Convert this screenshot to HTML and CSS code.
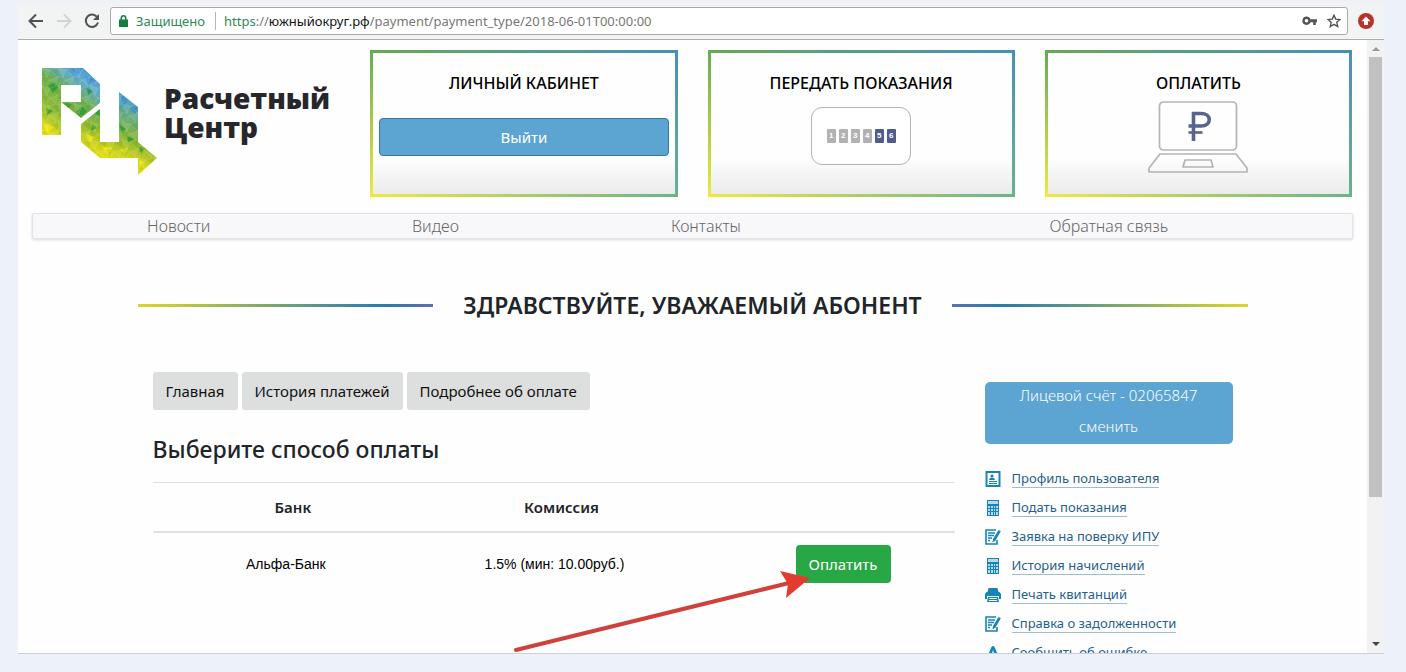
FILE: index.html
```html
<!DOCTYPE html>
<html lang="ru">
<head>
<meta charset="utf-8">
<title>Расчетный Центр</title>
<link rel="stylesheet" href="styles.css">
</head>
<body>
<svg class="sprite" aria-hidden="true">
  <symbol id="i-profile" viewBox="0 0 16 16">
    <path fill="none" stroke="currentColor" stroke-width="2" d="M1.500 1h13v14h-13z"/>
    <circle cx="7" cy="5" r="1.600" fill="currentColor"/>
    <path fill="currentColor" d="M4 9c0-3 6-3 6 0zM4 10h8v1H4zM4 12h8v1H4z"/>
  </symbol>
  <symbol id="i-calc" viewBox="0 0 16 16">
    <path fill="currentColor" fill-opacity=".3" d="M2 0h12v16H2z"/>
    <path fill="currentColor" fill-rule="evenodd" d="M2 0h12v16H2zM3 1v3h10V1zM3 6v2h2V6zm3 0v2h2V6zm3 0v2h1V6zm2 0v2h2V6zM3 9v2h2V9zm3 0v2h2V9zm3 0v2h1V9zm2 0v2h2V9zM3 12v3h2v-3zm3 0v3h2v-3zm3 0v3h1v-3zm2 0v3h2v-3z"/>
  </symbol>
  <symbol id="i-edit" viewBox="0 0 16 16">
    <path fill="none" stroke="currentColor" stroke-width="1.600" d="M11 1H1v14h11v-4"/>
    <path stroke="currentColor" stroke-width="1.300" d="M3 4h7M3 6.500h6M3 9h4M3 11.500h2"/>
    <path fill="currentColor" d="M13.500 1l2.300 1.300-5.300 9.200-3 2 .5-3.500z"/>
  </symbol>
  <symbol id="i-print" viewBox="0 0 16 16">
    <path fill="currentColor" fill-rule="evenodd" d="M3.500 1h9l1 4H2.500zM1.500 5h13L16 7v5h-2v-3H2v3H0V7zM3 10h10l1 5H2zM4.300 11l-.2 1h7.800l-.2-1zM4 13l-.2 1h8.400L12 13z"/>
  </symbol>
  <symbol id="i-alert" viewBox="0 0 16 16">
    <path fill="currentColor" fill-rule="evenodd" d="M8 1c1 0 1.500.7 2 2l5 12H1L6 3c.5-1.300 1-2 2-2zM8 5l-1.500 5h3z"/>
  </symbol>
</svg>

<header class="toolbar">
  <button class="tool" type="button" aria-label="Назад">
    <svg width="16" height="16" viewBox="0 0 16 16" fill="none" stroke="#50534f" stroke-width="2"><path d="M15 8H2M8 1.500L1.500 8 8 14.500"/></svg>
  </button>
  <button class="tool" type="button" aria-label="Вперёд">
    <svg width="16" height="16" viewBox="0 0 16 16" fill="none" stroke="#d3d3d3" stroke-width="2"><path d="M1 8h13M8 1.500L14.500 8 8 14.500"/></svg>
  </button>
  <button class="tool" type="button" aria-label="Обновить">
    <svg width="16" height="16" viewBox="0 0 16 16"><path fill="none" stroke="#50534f" stroke-width="2" d="M13.200 4.200A6.200 6.200 0 1 0 14 9.500"/><path fill="#50534f" d="M15 1v6H9z"/></svg>
  </button>
  <div class="address">
    <svg width="9" height="12" viewBox="0 0 9 12"><path fill="#11803f" fill-rule="evenodd" d="M0 4.500h1.500V3a3 3 0 0 1 6 0v1.500H9V12H0zM3 4.500h3V3a1.500 1.500 0 0 0-3 0z"/></svg>
    <span class="secure">Защищено</span>
    <div class="url" role="textbox" aria-label="Адрес страницы"><span class="scheme">https</span>://<span class="host">южныйокруг.рф</span>/payment/payment_type/2018-06-01T00:00:00</div>
    <svg width="15" height="10" viewBox="0 0 15 10"><path fill="#555" fill-rule="evenodd" d="M4.500.5a4.200 4.200 0 0 1 4 2.800H15v2.900h-1.200V9h-2.600V6.200H8.500A4.200 4.200 0 1 1 4.500.5zm0 2.500a1.800 1.800 0 1 0 0 3.600 1.800 1.800 0 0 0 0-3.600z"/></svg>
    <svg class="star" width="14" height="14" viewBox="0 0 14 14"><path fill="none" stroke="#50534f" stroke-width="1.400" d="M7 1.200l1.700 3.900 4.300.4-3.200 2.800.9 4.200L7 10.300l-3.700 2.200.9-4.200L1 5.500l4.300-.4z"/></svg>
  </div>
  <svg width="16" height="16" viewBox="0 0 16 16"><circle cx="8" cy="8" r="8" fill="#b5332b"/><path fill="#fff" d="M8 3.500l4.500 4.700H10V12H6V8.200H3.500z"/></svg>
</header>

<div class="window">
  <div class="page">
    <div class="top">
      <a class="logo" href="#">
        <svg width="115" height="108" viewBox="0 0 115 108">
          <defs>
            <linearGradient id="gp" gradientUnits="userSpaceOnUse" x1="52" y1="2" x2="8" y2="66">
              <stop offset="0" stop-color="#4298dd"/><stop offset=".22" stop-color="#63abc8"/><stop offset=".42" stop-color="#6cae4a"/><stop offset=".72" stop-color="#8fbb32"/><stop offset="1" stop-color="#e5dc12"/>
            </linearGradient>
            <linearGradient id="gu" gradientUnits="userSpaceOnUse" x1="88" y1="28" x2="62" y2="94">
              <stop offset="0" stop-color="#4a9fe0"/><stop offset=".3" stop-color="#68ac78"/><stop offset=".55" stop-color="#86b52f"/><stop offset=".85" stop-color="#d6d415"/><stop offset="1" stop-color="#e9df08"/>
            </linearGradient>
            <pattern id="mesh" width="16" height="18" patternUnits="userSpaceOnUse">
              <path fill="#fff" fill-opacity=".1" d="M0 0l8 2-3 7zM16 9l-8 3 6 6z"/>
              <path fill="#064" fill-opacity=".08" d="M8 2l8-2v9zM0 9l5 0-1 9z"/>
              <path fill="none" stroke="#fff" stroke-opacity=".18" stroke-width=".6" d="M0 0l8 2 8-2M8 2L5 9H0M5 9l3 3 8-3L8 2M0 0l5 9-5 9M8 12l-4 6M8 12l6 6M0 18l8-6M16 9v9"/>
            </pattern>
            <clipPath id="shape"><path clip-rule="evenodd" d="M0 0h41l17 16v19L39 50 19 34v33H0zM19 17v17h20V17zM58 41v33h19V24l19 15v35l19 16-19 17V90H58L39 74V56z"/></clipPath>
          </defs>
          <g clip-path="url(#shape)">
            <path fill="url(#gp)" d="M0 0h58v35L39 51 19 67H0z"/>
            <path fill="url(#gu)" d="M39 55l19-14 19-20 38 0v87H39z"/>
            <path fill="#249637" fill-opacity=".75" d="M6 18l6-4 4 5-5 6zM22 35l9 1-5 4zM34 44l6-6 5 5-6 7zM45 20l6 3-5 5zM50 44l8-3v8zM78 57l6 4-5 4zM85 68l7 3-6 4zM97 79l6 1-4 5zM50 56l5 4-6 3zM4 40l7 3-6 4z"/>
            <path fill="#2f80d2" fill-opacity=".5" d="M28 0h13l-5 7zM43 8l10 4-7 5zM79 27l8 6-7 6zM88 40l8-1-3 8z"/>
            <path fill="#fff000" fill-opacity=".6" d="M2 56l10 3-7 6zM44 66l9 3-6 6zM60 78l10 2-5 7zM97 92l5 2-5 6zM78 82l8-2-3 6z"/>
            <path fill="url(#mesh)" d="M0 0h115v108H0z"/>
          </g>
        </svg>
        <span class="logo-text">Расчетный<br>Центр</span>
      </a>
      <section class="card">
        <h2>ЛИЧНЫЙ КАБИНЕТ</h2>
        <button class="exit" type="button">Выйти</button>
      </section>
      <a class="card" href="#">
        <h2>ПЕРЕДАТЬ ПОКАЗАНИЯ</h2>
        <span class="meter"><i>1</i><i>2</i><i>3</i><i>4</i><i class="dark">5</i><i class="dark">6</i></span>
      </a>
      <a class="card" href="#">
        <h2>ОПЛАТИТЬ</h2>
        <svg class="laptop" width="100" height="72" viewBox="0 0 100 72" fill="none" stroke="#b4b4b6" stroke-width="1.700">
          <rect x="11.500" y="1" width="77" height="48" rx="4"/>
          <path stroke-linejoin="round" d="M12 53h76l11 14v4H1v-4zM37 59h26l2 7H35z"/>
          <path stroke="#56648f" stroke-width="3.600" d="M45.500 40V12.500H53c11 0 11 12.500 0 12.500H40.500"/><path stroke="#56648f" stroke-width="2.600" d="M40.500 31.500h14"/>
        </svg>
      </a>
    </div>

    <nav class="menu">
      <a href="#">Новости</a><a href="#">Видео</a><a href="#">Контакты</a><a href="#">Обратная связь</a>
    </nav>

    <main class="container">
      <h1 class="greeting">ЗДРАВСТВУЙТЕ, УВАЖАЕМЫЙ АБОНЕНТ</h1>
      <div class="columns">
        <section class="payment">
          <div class="buttons">
            <button type="button">Главная</button>
            <button type="button">История платежей</button>
            <button type="button">Подробнее об оплате</button>
          </div>
          <h2>Выберите способ оплаты</h2>
          <table>
            <colgroup><col class="c-bank"><col class="c-fee"><col></colgroup>
            <thead><tr><th scope="col">Банк</th><th scope="col">Комиссия</th><th></th></tr></thead>
            <tbody><tr><td>Альфа-Банк</td><td>1.5% (мин: 10.00руб.)</td><td class="action"><button class="pay" type="button">Оплатить</button></td></tr></tbody>
          </table>
        </section>
        <aside class="side">
          <button class="account" type="button"><span>Лицевой счёт - 02065847</span><span>сменить</span></button>
          <ul>
            <li><svg><use href="#i-profile"/></svg><a href="#">Профиль пользователя</a></li>
            <li><svg><use href="#i-calc"/></svg><a href="#">Подать показания</a></li>
            <li><svg><use href="#i-edit"/></svg><a href="#">Заявка на поверку ИПУ</a></li>
            <li><svg><use href="#i-calc"/></svg><a href="#">История начислений</a></li>
            <li><svg><use href="#i-print"/></svg><a href="#">Печать квитанций</a></li>
            <li><svg><use href="#i-edit"/></svg><a href="#">Справка о задолженности</a></li>
            <li><svg><use href="#i-alert"/></svg><a href="#">Сообщить об ошибке</a></li>
          </ul>
        </aside>
      </div>
    </main>
  </div>
  <div class="scrollbar" aria-hidden="true">
    <svg width="8" height="4" viewBox="0 0 8 4"><path fill="#999" d="M4 0l4 4H0z"/></svg>
    <div class="track"><div class="thumb"></div></div>
    <svg width="8" height="4" viewBox="0 0 8 4"><path fill="#444" d="M0 0h8L4 4z"/></svg>
  </div>
</div>
<svg class="pointer" width="298" height="84" viewBox="0 0 298 84" aria-hidden="true">
  <path stroke="#cf423c" stroke-width="4" stroke-linecap="round" d="M3 81L276 14"/>
  <path fill="#e23c30" d="M267 2l30 7-24 20 2-14z"/>
</svg>
</body>
</html>
```
FILE: styles.css
```css
* { box-sizing: border-box; }

body {
  margin: 0;
  height: 100vh;
  padding: 0 22px 18px 18px;
  display: flex;
  flex-direction: column;
  position: relative;
  overflow: hidden;
  background: #edf1f9;
  color: #212529;
  font: 15px/24px "Noto Sans", "Open Sans", sans-serif;
}

a { color: inherit; text-decoration: none; }
button { font: inherit; border: 0; padding: 0; cursor: pointer; }
h1, h2, ul { margin: 0; padding: 0; }
svg { flex: none; }
.sprite { position: absolute; width: 0; height: 0; }

.toolbar {
  flex: none;
  height: 40px;
  padding: 2px 10px 0;
  display: flex;
  align-items: center;
  gap: 12px;
  background: linear-gradient(#eef1f7, #f2f3f3 8px);
  border-bottom: 1px solid #aaaeac;
}
.tool { display: flex; background: none; }
.address {
  flex: 1;
  min-width: 0;
  height: 28px;
  margin: 0 -2px;
  padding: 0 6px 0 8px;
  display: flex;
  align-items: center;
  gap: 8px;
  background: #fff;
  border: 1px solid #a9aaa9;
  border-radius: 3px;
  font-size: 13px;
  line-height: 18px;
}
.secure { padding-right: 10px; border-right: 1px solid #b5b5b5; color: #2d8a57; }
.url { flex: 1; min-width: 0; white-space: nowrap; overflow: hidden; color: #777; }
.scheme { color: #2d8a57; }
.host { color: #111; }
.star { margin-left: 2px; }

.window {
  flex: 1;
  min-height: 0;
  display: flex;
  background: #fefefe;
  border-bottom: 1px solid #cdd0d6;
}
.page { flex: 1; min-width: 0; overflow: hidden; padding: 10px 15px 0; }
.scrollbar {
  width: 17px;
  padding: 7px 2px;
  display: flex;
  flex-direction: column;
  align-items: center;
  background: #f1f2f1;
}
.track { flex: 1; width: 100%; padding: 6px 0; }
.thumb { height: 76%; background: #c1c1c1; }

.top { display: grid; grid-template-columns: repeat(4, minmax(0, 1fr)); gap: 30px; }
.logo { padding: 18px 0 0 9px; display: flex; gap: 7px; }
.logo-text {
  padding-top: 16px;
  color: #27272b;
  font: 800 28px/29px "Open Sans", "Noto Sans", sans-serif;
}
.card {
  height: 147px;
  padding: 18px 6px 0;
  display: flex;
  flex-direction: column;
  align-items: center;
  color: #000;
  border: 3px solid transparent;
  background:
    linear-gradient(#fefefe 74%, #ebebeb) padding-box,
    linear-gradient(90deg, #63ad52, #4590bb) top / 100% 3px no-repeat border-box,
    linear-gradient(90deg, #f0e93c, #69b38d) bottom / 100% 3px no-repeat border-box,
    linear-gradient(#63ad52, #f0e93c) left / 3px 100% no-repeat border-box,
    linear-gradient(#4590bb, #69b38d) right / 3px 100% no-repeat border-box;
}
.card h2 { font-size: 16px; line-height: 24px; font-weight: 500; }
.exit {
  width: 100%;
  height: 38px;
  margin-top: 23px;
  color: #fff;
  background: #5ca4d1;
  border: 1px solid #39779f;
  border-radius: 4px;
}
.meter {
  width: 100px;
  height: 58px;
  margin-top: 12px;
  display: flex;
  align-items: center;
  justify-content: center;
  gap: 3px;
  background: #fff;
  border: 1px solid #b4b4b6;
  border-radius: 11px;
}
.meter i {
  width: 9px;
  height: 14px;
  color: #fff;
  background: #b2b2b2;
  border-radius: 1px;
  font: bold 8px/14px "Liberation Sans", sans-serif;
  text-align: center;
}
.meter .dark { background: #4e5d8c; }
.laptop { margin-top: 6px; }

.menu {
  margin: 16px -1px 0;
  display: grid;
  grid-template-columns: 292fr 222fr 320fr 487fr;
  background: #f8f8fa;
  border: 1px solid #e4e4e8;
  border-radius: 2px;
  box-shadow: 0 1px 3px rgba(0, 0, 0, .15);
  color: #666;
  text-align: center;
  font-size: 16px;
  font-weight: 300;
}

.container { max-width: 1110px; margin: 0 auto; padding-top: 48px; }
.greeting {
  display: flex;
  align-items: center;
  gap: 30px;
  font-size: 23px;
  line-height: 36px;
  font-weight: 600;
  white-space: nowrap;
}
.greeting::before, .greeting::after {
  content: "";
  flex: 1;
  height: 3px;
  background: linear-gradient(90deg, #d9d72e, #2e79ae 83%, #5a70ae);
}
.greeting::after { background: linear-gradient(270deg, #d9d72e, #2e79ae 83%, #5a70ae); }

.columns { padding: 49px 15px 0; display: grid; grid-template-columns: minmax(0, 1fr) 248px; gap: 30px; }
.buttons { display: flex; gap: 4px; }
.buttons button { height: 38px; padding: 0 13px; color: #111; background: #dddede; border-radius: 3px; }
.payment h2 { margin: 21px 0 15px; font-size: 23px; line-height: 36px; font-weight: 500; }
table { width: 100%; table-layout: fixed; border-collapse: collapse; text-align: center; }
.c-bank { width: 35%; }
.c-fee { width: 32%; }
th { height: 49px; padding: 0; font-size: 15px; font-weight: 600; border-top: 1px solid #dee2e6; border-bottom: 2px solid #dee2e6; }
td { padding: 12px 14px 12px 0; color: #000; font: 14px/24px "Liberation Sans", sans-serif; }
.action { padding-right: 64px; text-align: right; }
.pay { height: 38px; padding: 0 13px; color: #fff; background: #28a745; border-radius: 4px; font: 15px/24px "Noto Sans", sans-serif; }

.side { padding-top: 10px; }
.account {
  width: 100%;
  height: 62px;
  padding-bottom: 6px;
  display: flex;
  flex-direction: column;
  justify-content: flex-end;
  align-items: center;
  gap: 7px;
  color: #fff;
  background: #5ca4d1;
  border-radius: 5px;
  font-size: 15px;
  font-weight: 300;
}
.side ul { margin-top: 20px; list-style: none; }
.side li { height: 29px; display: flex; align-items: center; gap: 11px; color: #1683bb; }
.side li svg { width: 16px; height: 16px; }
.side a { color: #265f8c; border-bottom: 1px solid #9dbdd3; font-size: 13px; line-height: 18px; }

.pointer { position: absolute; left: 513px; top: 569px; }
```
